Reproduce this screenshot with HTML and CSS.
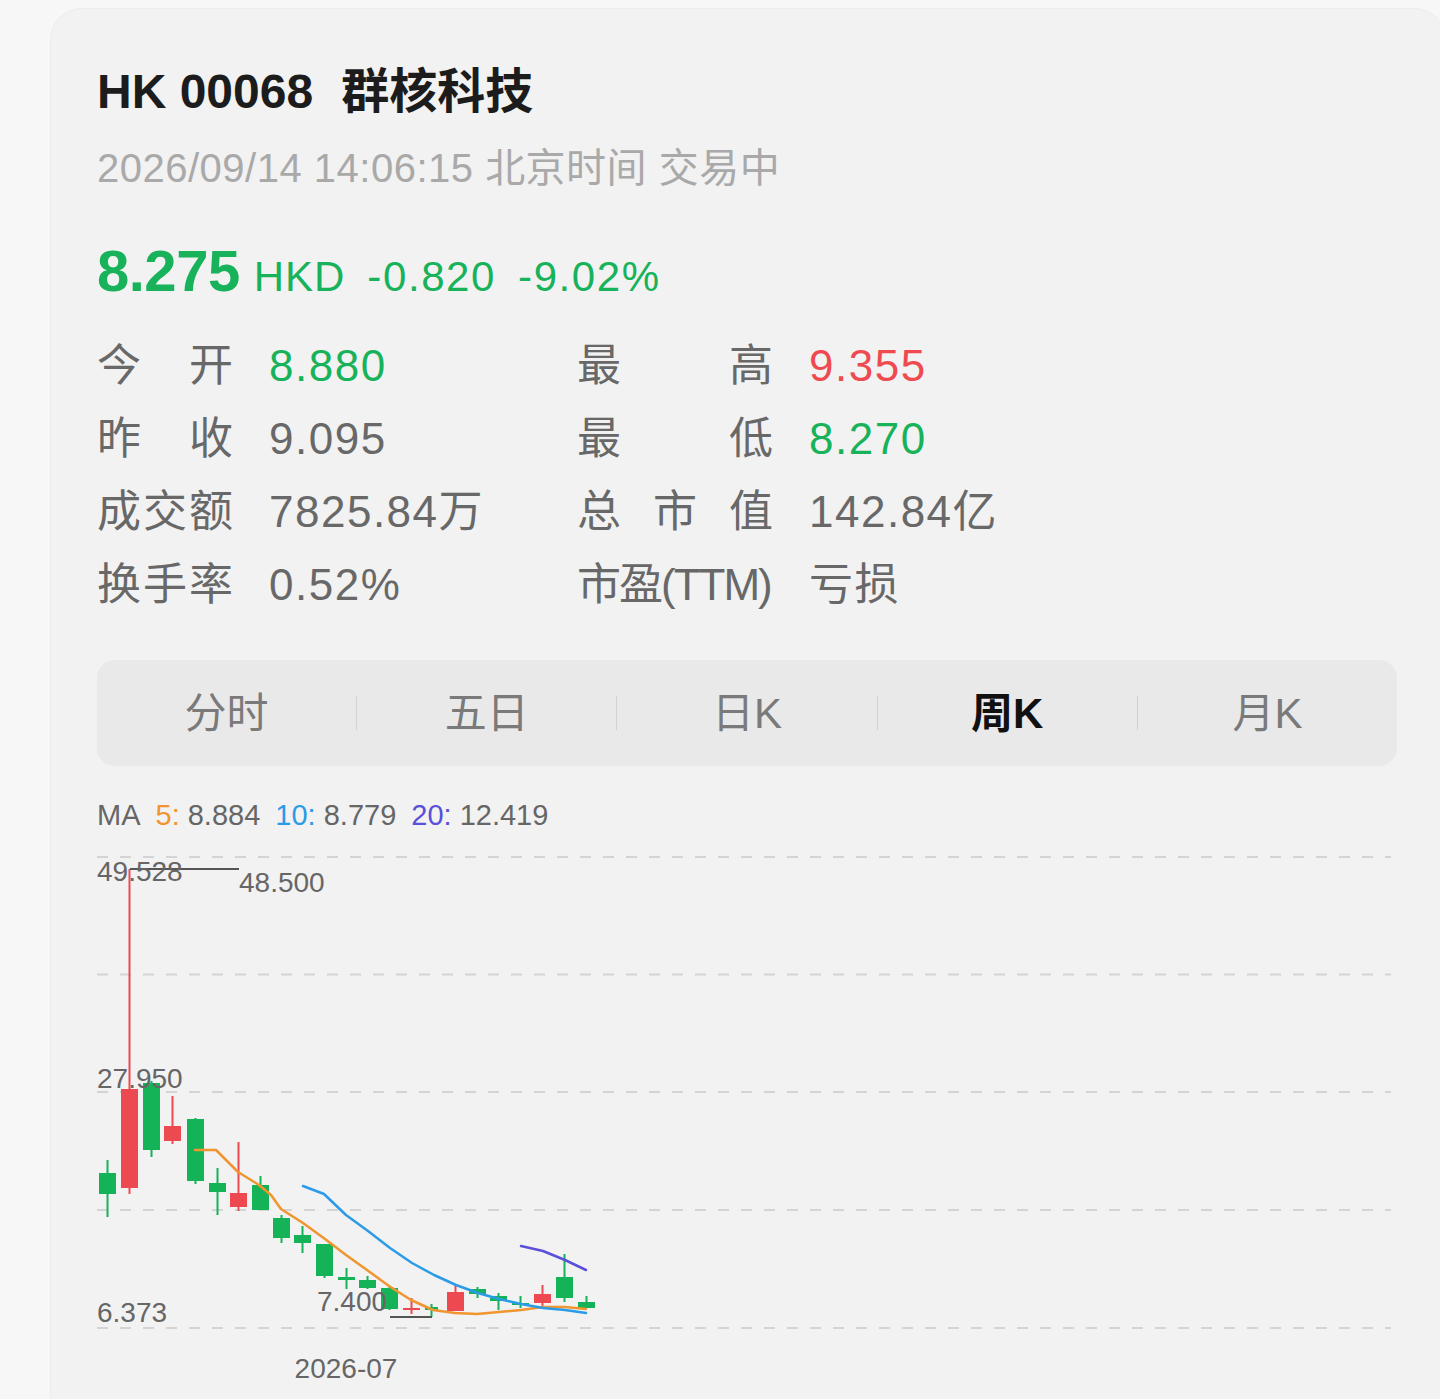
FILE: index.html
```html
<!DOCTYPE html>
<html lang="zh-CN">
<head>
    <meta charset="UTF-8">
    <meta name="viewport" content="width=device-width, initial-scale=1.0">
    <title>群核科技 HK 00068</title>
    <link rel="stylesheet" href="styles.css">
</head>
<body>
    <div class="card">
        <h1 class="title">HK 00068<span class="title-name">群核科技</span></h1>
        <div class="subtitle">2026/09/14 14:06:15 北京时间 交易中</div>

        <div class="quote">
            <span class="price">8.275</span>
            <span class="ccy">HKD</span>
            <span class="chg">-0.820</span>
            <span class="chg">-9.02%</span>
        </div>

        <div class="stats">
            <div class="stat">
                <span class="lbl"><span>今</span><span>开</span></span>
                <span class="val down">8.880</span>
            </div>
            <div class="stat wide">
                <span class="lbl"><span>最</span><span>高</span></span>
                <span class="val up">9.355</span>
            </div>
            <div class="stat">
                <span class="lbl"><span>昨</span><span>收</span></span>
                <span class="val">9.095</span>
            </div>
            <div class="stat wide">
                <span class="lbl"><span>最</span><span>低</span></span>
                <span class="val down">8.270</span>
            </div>
            <div class="stat">
                <span class="lbl"><span>成</span><span>交</span><span>额</span></span>
                <span class="val">7825.84万</span>
            </div>
            <div class="stat wide">
                <span class="lbl"><span>总</span><span>市</span><span>值</span></span>
                <span class="val">142.84亿</span>
            </div>
            <div class="stat">
                <span class="lbl"><span>换</span><span>手</span><span>率</span></span>
                <span class="val">0.52%</span>
            </div>
            <div class="stat wide">
                <span class="lbl"><span class="tight">市盈(TTM)</span></span>
                <span class="val">亏损</span>
            </div>
        </div>

        <div class="tabs">
            <div class="tab">分时</div>
            <i class="sep"></i>
            <div class="tab">五日</div>
            <i class="sep"></i>
            <div class="tab">日K</div>
            <i class="sep"></i>
            <div class="tab active">周K</div>
            <i class="sep"></i>
            <div class="tab">月K</div>
        </div>

        <div class="ma-legend">
            <span>MA</span>
            <span><b class="ma5">5:</b> 8.884</span>
            <span><b class="ma10">10:</b> 8.779</span>
            <span><b class="ma20">20:</b> 12.419</span>
        </div>

        <!-- 周K 图 -->
        <svg class="chart" width="1302" height="556" viewBox="96 840 1302 556">
            <g class="grid">
                <line x1="96" y1="856" x2="1390" y2="856"/>
                <line x1="96" y1="973.5" x2="1390" y2="973.5"/>
                <line x1="96" y1="1091" x2="1390" y2="1091"/>
                <line x1="96" y1="1209" x2="1390" y2="1209"/>
                <line x1="96" y1="1327" x2="1390" y2="1327"/>
            </g>

            <g class="candles">
                <line class="g" x1="106.5" y1="1159" x2="106.5" y2="1216"/><rect class="g" x="98" y="1172" width="17" height="21"/>
                <line class="r" x1="128.5" y1="868" x2="128.5" y2="1193"/><rect class="r" x="120" y="1088" width="17" height="99"/>
                <line class="g" x1="150.5" y1="1080" x2="150.5" y2="1156"/><rect class="g" x="142" y="1082" width="17" height="67"/>
                <line class="r" x1="171.5" y1="1095" x2="171.5" y2="1143"/><rect class="r" x="163" y="1125" width="17" height="15"/>
                <line class="g" x1="194.5" y1="1117" x2="194.5" y2="1183"/><rect class="g" x="186" y="1118" width="17" height="62"/>
                <line class="g" x1="216.5" y1="1167" x2="216.5" y2="1214"/><rect class="g" x="208" y="1182" width="17" height="9"/>
                <line class="r" x1="237.5" y1="1141" x2="237.5" y2="1210"/><rect class="r" x="229" y="1192" width="17" height="14"/>
                <line class="g" x1="259.5" y1="1175" x2="259.5" y2="1209"/><rect class="g" x="251" y="1184" width="17" height="25"/>
                <line class="g" x1="280.5" y1="1214" x2="280.5" y2="1242"/><rect class="g" x="272" y="1217" width="17" height="20"/>
                <line class="g" x1="301.5" y1="1225" x2="301.5" y2="1252"/><rect class="g" x="293" y="1234" width="17" height="8"/>
                <line class="g" x1="323.5" y1="1243" x2="323.5" y2="1277"/><rect class="g" x="315" y="1243" width="17" height="32"/>
                <line class="g" x1="345.5" y1="1267" x2="345.5" y2="1288"/><rect class="g" x="337" y="1276" width="17" height="3"/>
                <line class="g" x1="366.5" y1="1275" x2="366.5" y2="1288"/><rect class="g" x="358" y="1279" width="17" height="8"/>
                <line class="g" x1="388.5" y1="1286" x2="388.5" y2="1309"/><rect class="g" x="380" y="1287" width="17" height="21"/>
                <line class="r" x1="410.5" y1="1297" x2="410.5" y2="1313"/><rect class="r" x="402" y="1307" width="17" height="2"/>
                <line class="g" x1="430.5" y1="1303" x2="430.5" y2="1316"/><rect class="g" x="424" y="1306" width="13" height="3"/>
                <line class="r" x1="454.5" y1="1284" x2="454.5" y2="1310"/><rect class="r" x="446" y="1291" width="17" height="19"/>
                <line class="g" x1="476.5" y1="1286" x2="476.5" y2="1297"/><rect class="g" x="468" y="1288" width="17" height="5"/>
                <line class="g" x1="497.5" y1="1292" x2="497.5" y2="1309"/><rect class="g" x="489" y="1295" width="17" height="5"/>
                <line class="g" x1="519.5" y1="1295" x2="519.5" y2="1307"/><rect class="g" x="511" y="1302" width="17" height="2"/>
                <line class="r" x1="541.5" y1="1284" x2="541.5" y2="1305"/><rect class="r" x="533" y="1293" width="17" height="9"/>
                <line class="g" x1="563.5" y1="1253" x2="563.5" y2="1301"/><rect class="g" x="555" y="1276" width="17" height="21"/>
                <line class="g" x1="585.5" y1="1295" x2="585.5" y2="1307"/><rect class="g" x="577" y="1301" width="17" height="6"/>
            </g>

            <polyline class="ma ma5" points="194,1149 215,1149 237,1171 258,1184 270,1194 280,1208 302,1222 324,1238 345,1254 366,1269 388,1285 410,1299 432,1309 454,1312 476,1313 498,1311 520,1309 542,1306 564,1306 585,1308"/>
            <polyline class="ma ma10" points="302,1185 323,1193 345,1214 367,1230 389,1247 411,1262 433,1274 455,1284 477,1292 498,1298 520,1303 542,1307 564,1309 585,1312"/>
            <polyline class="ma ma20" points="520,1245 542,1250 564,1259 585,1269"/>

            <line class="mark" x1="129" y1="868" x2="238" y2="868"/>
            <line class="mark" x1="389" y1="1316" x2="431" y2="1316"/>

            <g class="axis">
                <text x="96" y="880">49.528</text>
                <text x="238" y="891">48.500</text>
                <text x="96" y="1087">27.950</text>
                <text x="96" y="1321">6.373</text>
                <text x="316" y="1310">7.400</text>
                <text x="345" y="1377" text-anchor="middle">2026-07</text>
            </g>
        </svg>
    </div>
</body>
</html>
```

FILE: styles.css
```css
body {
    margin: 0;
    background-color: #f7f7f7;
    font-family: "Liberation Sans", "Noto Sans CJK SC", sans-serif;
    overflow: hidden;
    height: 1399px;
}

.card {
    margin: 8px 0 0 50px;
    width: 1396px;
    min-height: 1420px;
    box-sizing: border-box;
    padding: 55px 48px 0 46px;
    background-color: #f2f2f2;
    border: 1px solid #ececec;
    border-radius: 32px 32px 0 0;
}

.title {
    margin: 0;
    font-size: 48px;
    line-height: 56px;
    font-weight: bold;
    color: #1c1c1c;
}

.title-name {
    margin-left: 28px;
}

.subtitle {
    margin-top: 24px;
    font-size: 40px;
    line-height: 48px;
    letter-spacing: 0.5px;
    color: #a9a9a9;
}

/* 价格行 */
.quote {
    display: flex;
    align-items: baseline;
    margin-top: 47px;
    height: 64px;
    line-height: 64px;
    color: #17b25a;
}

.price {
    font-size: 58px;
    font-weight: bold;
    letter-spacing: -0.5px;
}

.ccy {
    margin-left: 14px;
    font-size: 42px;
    letter-spacing: 1px;
}

.chg {
    margin-left: 22px;
    font-size: 42px;
    letter-spacing: 1.6px;
}

/* 行情数据 */
.stats {
    display: grid;
    grid-template-columns: 480px auto;
    margin-top: 26px;
    font-size: 44px;
    line-height: 73px;
    color: #686868;
}

.stat {
    display: flex;
    white-space: nowrap;
}

.lbl {
    display: flex;
    justify-content: space-between;
    width: 136px;
}

.stat.wide .lbl {
    width: 196px;
}

.lbl .tight {
    letter-spacing: -2px;
}

.val {
    margin-left: 36px;
    letter-spacing: 1.5px;
}

.val.down {
    color: #17b25a;
}

.val.up {
    color: #ee4a50;
}

/* 周期切换 */
.tabs {
    display: flex;
    align-items: center;
    margin-top: 39px;
    height: 106px;
    border-radius: 18px;
    background-color: #e9e9e9;
}

.tab {
    flex: 1;
    padding-bottom: 7px;
    text-align: center;
    font-size: 42px;
    color: #7a7a7a;
}

.tab.active {
    font-weight: bold;
    color: #111111;
}

.sep {
    width: 1px;
    height: 34px;
    background-color: #d2d2d2;
}

.ma-legend {
    display: flex;
    gap: 15px;
    margin-top: 32px;
    font-size: 29px;
    line-height: 34px;
    color: #666666;
}

.ma-legend b {
    font-weight: normal;
}

.ma5 {
    color: #f0952f;
}

.ma10 {
    color: #2b9be8;
}

.ma20 {
    color: #5b50d8;
}

.chart {
    display: block;
    margin-top: 9px;
}

.grid line {
    stroke: #d4d4d4;
    stroke-width: 2;
    stroke-dasharray: 11 12;
}

.candles line {
    stroke-width: 2;
}

.candles line.g {
    stroke: #14b358;
}

.candles line.r {
    stroke: #ec4a50;
}

.candles rect.g {
    fill: #14b358;
}

.candles rect.r {
    fill: #ec4a50;
}

.ma {
    fill: none;
    stroke-width: 2.5;
    stroke-linejoin: round;
    stroke-linecap: round;
}

.ma.ma5 {
    stroke: #f0952f;
}

.ma.ma10 {
    stroke: #2b9be8;
}

.ma.ma20 {
    stroke: #5b50d8;
}

.mark {
    stroke: #555555;
    stroke-width: 2;
}

.axis text {
    font-family: "Liberation Sans", sans-serif;
    font-size: 28px;
    fill: #666666;
}
```
